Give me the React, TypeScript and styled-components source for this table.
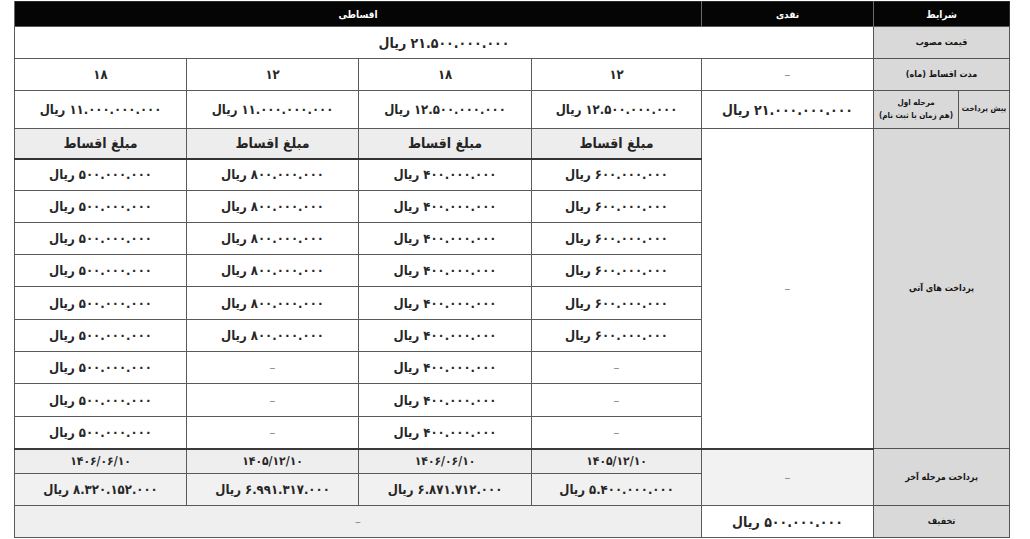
import React from "react";
import styled, { createGlobalStyle } from "styled-components";

const Global = createGlobalStyle`
  html, body { margin: 0; padding: 0; background: #ffffff; }
  body { font-family: "DejaVu Sans Condensed", "DejaVu Sans", sans-serif; }
`;

const Page = styled.div`
  width: 1030px;
  height: 539px;
  box-sizing: border-box;
  padding: 1px 21px 0 14px;
  background: #ffffff;
  overflow: hidden;
`;

const Table = styled.table`
  direction: rtl;
  width: 995px;
  table-layout: fixed;
  border-collapse: collapse;
  border: 1.5px solid #2b2b2b;
  font-family: "DejaVu Sans Condensed", "DejaVu Sans", sans-serif;
  color: #232323;
`;

const Row = styled.tr<{ $h: number }>`
  height: ${(p) => p.$h}px;
`;

const HeadCell = styled.th`
  background: #050505;
  color: #ffffff;
  font-size: 10px;
  font-weight: 700;
  padding: 0;
  border-left: 1px solid #6a6a6a;
  text-align: center;
`;

const Label = styled.th<{ $size?: number }>`
  background: #d9d9d9;
  color: #161616;
  font-size: ${(p) => p.$size ?? 9}px;
  font-weight: 700;
  line-height: 1.6;
  padding: 0 2px;
  border: 1px solid #555555;
  text-align: center;
  white-space: nowrap;
`;

const Cell = styled.td<{ $bg?: string; $size?: number; $thick?: "top" | "bottom" }>`
  background: ${(p) => p.$bg ?? "#ffffff"};
  font-size: ${(p) => p.$size ?? 13}px;
  font-weight: 700;
  padding: 0;
  border: 1px solid #5a5a5a;
  ${(p) => (p.$thick === "top" ? "border-top: 2px solid #3a3a3a;" : "")}
  ${(p) => (p.$thick === "bottom" ? "border-bottom: 2px solid #3a3a3a;" : "")}
  text-align: center;
  white-space: nowrap;
  color: #262626;
`;

const SubHead = styled.td`
  background: #ededed;
  font-size: 14px;
  font-weight: 700;
  padding: 0;
  border: 1px solid #5a5a5a;
  border-bottom: 2px solid #333333;
  text-align: center;
  color: #242424;
`;

const Dash = styled.span`
  color: #8a8a8a;
  font-size: 13px;
  font-weight: 400;
`;

const Amount = styled.span``;

const dash = <Dash>–</Dash>;
const rial = (n: string) => <Amount>{n} ریال</Amount>;

const colA = [...Array(6).fill("۶۰۰.۰۰۰.۰۰۰"), null, null, null];
const colB = Array(9).fill("۴۰۰.۰۰۰.۰۰۰");
const colC = [...Array(6).fill("۸۰۰.۰۰۰.۰۰۰"), null, null, null];
const colD = Array(9).fill("۵۰۰.۰۰۰.۰۰۰");
const rowHeights = [32, 32, 32, 32, 33, 32, 32, 33, 32];

const widths = [51, 85, 172, 170, 173, 172, 172];

export default function App() {
  return (
    <>
      <Global />
      <Page>
        <Table>
          <colgroup>
            {widths.map((w, i) => (
              <col key={i} style={{ width: w }} />
            ))}
          </colgroup>
          <tbody>
            <Row $h={25}>
              <HeadCell colSpan={2}>شرایط</HeadCell>
              <HeadCell>نقدی</HeadCell>
              <HeadCell colSpan={4}>اقساطی</HeadCell>
            </Row>
            <Row $h={32}>
              <Label colSpan={2} $size={9}>قیمت مصوب</Label>
              <Cell colSpan={5} $size={14}>{rial("۲۱.۵۰۰.۰۰۰.۰۰۰")}</Cell>
            </Row>
            <Row $h={32}>
              <Label colSpan={2} $size={9}>مدت اقساط (ماه)</Label>
              <Cell>{dash}</Cell>
              <Cell>۱۲</Cell>
              <Cell>۱۸</Cell>
              <Cell>۱۲</Cell>
              <Cell>۱۸</Cell>
            </Row>
            <Row $h={38}>
              <Label $size={8}>پیش پرداخت</Label>
              <Label $size={8}>
                مرحله اول
                <br />
                (هم زمان با ثبت نام)
              </Label>
              <Cell $size={14}>{rial("۲۱.۰۰۰.۰۰۰.۰۰۰")}</Cell>
              <Cell>{rial("۱۲.۵۰۰.۰۰۰.۰۰۰")}</Cell>
              <Cell>{rial("۱۲.۵۰۰.۰۰۰.۰۰۰")}</Cell>
              <Cell>{rial("۱۱.۰۰۰.۰۰۰.۰۰۰")}</Cell>
              <Cell>{rial("۱۱.۰۰۰.۰۰۰.۰۰۰")}</Cell>
            </Row>
            <Row $h={30}>
              <Label colSpan={2} rowSpan={10} $size={9}>پرداخت های آتی</Label>
              <Cell rowSpan={10}>{dash}</Cell>
              <SubHead>مبلغ اقساط</SubHead>
              <SubHead>مبلغ اقساط</SubHead>
              <SubHead>مبلغ اقساط</SubHead>
              <SubHead>مبلغ اقساط</SubHead>
            </Row>
            {rowHeights.map((h, i) => (
              <Row $h={h} key={i}>
                <Cell>{colA[i] ? rial(colA[i]) : dash}</Cell>
                <Cell>{colB[i] ? rial(colB[i]) : dash}</Cell>
                <Cell>{colC[i] ? rial(colC[i]) : dash}</Cell>
                <Cell>{colD[i] ? rial(colD[i]) : dash}</Cell>
              </Row>
            ))}
            <Row $h={25}>
              <Label colSpan={2} rowSpan={2} $size={9}>پرداخت مرحله آخر</Label>
              <Cell rowSpan={2} $bg="#f2f2f2" $thick="top">{dash}</Cell>
              <Cell $bg="#eeeeee" $size={12} $thick="top">۱۴۰۵/۱۲/۱۰</Cell>
              <Cell $bg="#eeeeee" $size={12} $thick="top">۱۴۰۶/۰۶/۱۰</Cell>
              <Cell $bg="#eeeeee" $size={12} $thick="top">۱۴۰۵/۱۲/۱۰</Cell>
              <Cell $bg="#eeeeee" $size={12} $thick="top">۱۴۰۶/۰۶/۱۰</Cell>
            </Row>
            <Row $h={32}>
              <Cell $bg="#f1f1f1">{rial("۵.۴۰۰.۰۰۰.۰۰۰")}</Cell>
              <Cell $bg="#f1f1f1">{rial("۶.۸۷۱.۷۱۲.۰۰۰")}</Cell>
              <Cell $bg="#f1f1f1">{rial("۶.۹۹۱.۳۱۷.۰۰۰")}</Cell>
              <Cell $bg="#f1f1f1">{rial("۸.۳۲۰.۱۵۲.۰۰۰")}</Cell>
            </Row>
            <Row $h={32}>
              <Label colSpan={2} $size={9}>تخفیف</Label>
              <Cell $size={14}>{rial("۵۰۰.۰۰۰.۰۰۰")}</Cell>
              <Cell colSpan={4} $bg="#efefef">{dash}</Cell>
            </Row>
          </tbody>
        </Table>
      </Page>
    </>
  );
}
